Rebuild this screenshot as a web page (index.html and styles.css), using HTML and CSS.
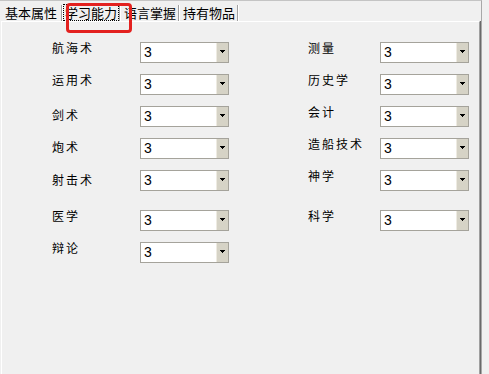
FILE: index.html
```html
<!DOCTYPE html>
<html lang="zh-CN">
<head>
<meta charset="utf-8">
<title>学习能力</title>
<link rel="stylesheet" href="styles.css">
</head>
<body>
<div class="frame">
  <div class="tabs">
    <div class="tab first">基本属性</div>
    <span class="sep"></span>
    <div class="tab active"><span class="focus">学习能力</span></div>
    <span class="sep"></span>
    <div class="tab">语言掌握</div>
    <span class="sep"></span>
    <div class="tab">持有物品</div>
    <span class="sep"></span>
  </div>
  <div class="panel">
    <div class="columns">
      <div class="col left">
        <div class="row"><span class="lbl">航海术</span><div class="combo"><span class="val">3</span><span class="btn"><svg width="5" height="3" viewBox="0 0 5 3" shape-rendering="crispEdges"><rect x="0" y="0" width="5" height="1"/><rect x="1" y="1" width="3" height="1"/><rect x="2" y="2" width="1" height="1"/></svg></span></div></div>
        <div class="row"><span class="lbl">运用术</span><div class="combo"><span class="val">3</span><span class="btn"><svg width="5" height="3" viewBox="0 0 5 3" shape-rendering="crispEdges"><rect x="0" y="0" width="5" height="1"/><rect x="1" y="1" width="3" height="1"/><rect x="2" y="2" width="1" height="1"/></svg></span></div></div>
        <div class="row"><span class="lbl drop">剑术</span><div class="combo"><span class="val">3</span><span class="btn"><svg width="5" height="3" viewBox="0 0 5 3" shape-rendering="crispEdges"><rect x="0" y="0" width="5" height="1"/><rect x="1" y="1" width="3" height="1"/><rect x="2" y="2" width="1" height="1"/></svg></span></div></div>
        <div class="row"><span class="lbl drop">炮术</span><div class="combo"><span class="val">3</span><span class="btn"><svg width="5" height="3" viewBox="0 0 5 3" shape-rendering="crispEdges"><rect x="0" y="0" width="5" height="1"/><rect x="1" y="1" width="3" height="1"/><rect x="2" y="2" width="1" height="1"/></svg></span></div></div>
        <div class="row tall"><span class="lbl drop-more">射击术</span><div class="combo"><span class="val">3</span><span class="btn"><svg width="5" height="3" viewBox="0 0 5 3" shape-rendering="crispEdges"><rect x="0" y="0" width="5" height="1"/><rect x="1" y="1" width="3" height="1"/><rect x="2" y="2" width="1" height="1"/></svg></span></div></div>
        <div class="row"><span class="lbl">医学</span><div class="combo"><span class="val">3</span><span class="btn"><svg width="5" height="3" viewBox="0 0 5 3" shape-rendering="crispEdges"><rect x="0" y="0" width="5" height="1"/><rect x="1" y="1" width="3" height="1"/><rect x="2" y="2" width="1" height="1"/></svg></span></div></div>
        <div class="row"><span class="lbl">辩论</span><div class="combo"><span class="val">3</span><span class="btn"><svg width="5" height="3" viewBox="0 0 5 3" shape-rendering="crispEdges"><rect x="0" y="0" width="5" height="1"/><rect x="1" y="1" width="3" height="1"/><rect x="2" y="2" width="1" height="1"/></svg></span></div></div>
      </div>
      <div class="col right">
        <div class="row"><span class="lbl">测量</span><div class="combo"><span class="val">3</span><span class="btn"><svg width="5" height="3" viewBox="0 0 5 3" shape-rendering="crispEdges"><rect x="0" y="0" width="5" height="1"/><rect x="1" y="1" width="3" height="1"/><rect x="2" y="2" width="1" height="1"/></svg></span></div></div>
        <div class="row"><span class="lbl">历史学</span><div class="combo"><span class="val">3</span><span class="btn"><svg width="5" height="3" viewBox="0 0 5 3" shape-rendering="crispEdges"><rect x="0" y="0" width="5" height="1"/><rect x="1" y="1" width="3" height="1"/><rect x="2" y="2" width="1" height="1"/></svg></span></div></div>
        <div class="row"><span class="lbl">会计</span><div class="combo"><span class="val">3</span><span class="btn"><svg width="5" height="3" viewBox="0 0 5 3" shape-rendering="crispEdges"><rect x="0" y="0" width="5" height="1"/><rect x="1" y="1" width="3" height="1"/><rect x="2" y="2" width="1" height="1"/></svg></span></div></div>
        <div class="row"><span class="lbl">造船技术</span><div class="combo"><span class="val">3</span><span class="btn"><svg width="5" height="3" viewBox="0 0 5 3" shape-rendering="crispEdges"><rect x="0" y="0" width="5" height="1"/><rect x="1" y="1" width="3" height="1"/><rect x="2" y="2" width="1" height="1"/></svg></span></div></div>
        <div class="row tall"><span class="lbl">神学</span><div class="combo"><span class="val">3</span><span class="btn"><svg width="5" height="3" viewBox="0 0 5 3" shape-rendering="crispEdges"><rect x="0" y="0" width="5" height="1"/><rect x="1" y="1" width="3" height="1"/><rect x="2" y="2" width="1" height="1"/></svg></span></div></div>
        <div class="row"><span class="lbl">科学</span><div class="combo"><span class="val">3</span><span class="btn"><svg width="5" height="3" viewBox="0 0 5 3" shape-rendering="crispEdges"><rect x="0" y="0" width="5" height="1"/><rect x="1" y="1" width="3" height="1"/><rect x="2" y="2" width="1" height="1"/></svg></span></div></div>
      </div>
    </div>
  </div>
  <div class="highlight"></div>
</div>
</body>
</html>
```

FILE: styles.css
```css
* { box-sizing: border-box; }

html, body {
  margin: 0;
  padding: 0;
  background: #f0f0f0;
  width: 489px;
  height: 374px;
  overflow: hidden;
}

body {
  font-family: "Noto Sans CJK SC", "Noto Sans", sans-serif;
  color: #000;
}

.frame {
  position: relative;
  width: 482px;
  height: 374px;
  border-top: 1px solid #c4c4c4;
  border-right: 1px solid #a8a8a8;
  display: flex;
  flex-direction: column;
}

/* ---- tab strip ---- */
.tabs {
  height: 20px;
  padding-top: 3px;
  display: flex;
  align-items: flex-start;
  flex: none;
}

.tab {
  font-size: 13px;
  line-height: 17px;
  height: 17px;
  padding: 0 2px 0 3px;
  white-space: nowrap;
}

.tab.first { padding-left: 5px; padding-right: 4px; }

.tab.active { padding: 0; }

.focus {
  display: block;
  height: 17px;
  line-height: 15px;
  border: 1px dotted #000;
  padding: 0 1px;
}

.sep {
  width: 2px;
  height: 16px;
  margin-top: 1px;
  border-left: 1px solid #a0a0a0;
  border-right: 1px solid #ffffff;
  flex: none;
}

/* ---- panel ---- */
.panel {
  flex: 1;
  margin: 0 1px 0 1px;
  border-top: 1px solid #ffffff;
  border-left: 1px solid #ffffff;
  border-right: 1px solid #a0a0a0;
  box-shadow: 1px 0 0 #696969;
  padding-top: 20px;
}

.columns {
  display: flex;
  padding-left: 50px;
}

.col { display: flex; flex-direction: column; }
.col.left { width: 256px; }

.row {
  display: flex;
  align-items: flex-start;
  height: 32px;
}
.row.tall { height: 40px; }

.lbl {
  font-size: 12px;
  line-height: 12px;
  letter-spacing: 2px;
  white-space: nowrap;
}
.left .lbl { width: 88px; }
.right .lbl { width: 72px; }
.lbl.drop { margin-top: 3px; }
.lbl.drop-more { margin-top: 4px; }

/* ---- combo box ---- */
.combo {
  width: 89px;
  height: 21px;
  border: 1px solid #a5a39b;
  background: #ffffff;
  display: flex;
  flex: none;
}

.val {
  flex: 1;
  font-family: "Liberation Sans", Arial, sans-serif;
  font-size: 14px;
  line-height: 18px;
  padding-left: 3px;
}

.btn {
  width: 12px;
  height: 19px;
  background: #d6d3c6;
  border-left: 1px solid #eeebe2;
  display: flex;
  align-items: center;
  justify-content: center;
  padding-bottom: 3px;
}

.btn svg { display: block; fill: #000; }

/* ---- annotation overlay ---- */
.highlight {
  position: absolute;
  left: 66px;
  top: 2px;
  width: 66px;
  height: 30px;
  border: 3px solid #e3211f;
  border-radius: 4px;
  pointer-events: none;
}
```
